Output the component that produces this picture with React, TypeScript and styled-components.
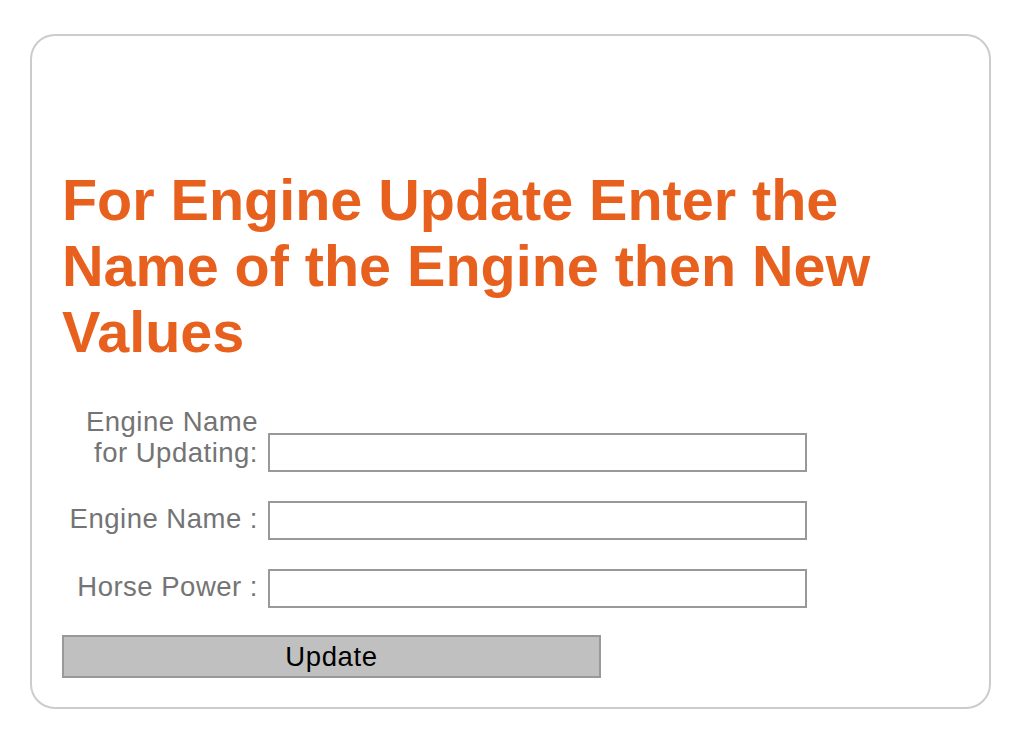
import React from "react";
import styled, { createGlobalStyle } from "styled-components";

const Global = createGlobalStyle`
  html, body { margin: 0; padding: 0; background: #ffffff; }
  body { font-family: "Liberation Sans", Arial, Helvetica, sans-serif; }
`;

const Card = styled.div`
  box-sizing: border-box;
  margin: 34px 0 0 30px;
  width: 961px;
  height: 675px;
  border: 2px solid #cccccc;
  border-radius: 25px;
  padding: 0 30px 0 30px;
  display: flex;
  flex-direction: column;
`;

const Heading = styled.h1`
  margin: 131px 0 0 0;
  width: 880px;
  font-size: 57.5px;
  line-height: 66px;
  font-weight: 700;
  color: #e8601e;
`;

const Form = styled.form`
  margin-top: 41px;
  display: grid;
  grid-template-columns: 196px 540px;
  column-gap: 10px;
  row-gap: 29px;
  align-items: end;
`;

const Label = styled.label<{ $drop?: number }>`
  text-align: right;
  font-size: 27.5px;
  letter-spacing: 0.5px;
  line-height: 31px;
  color: #747474;
  padding-bottom: ${(p) => p.$drop ?? 6}px;
  white-space: nowrap;
`;

const Input = styled.input`
  box-sizing: border-box;
  width: 539px;
  height: 39px;
  margin: 0;
  border: 2px solid #999999;
  background: #ffffff;
  font-family: inherit;
  font-size: 20px;
  padding: 0 6px;
  outline: none;
`;

const Button = styled.button`
  grid-column: 1 / span 2;
  box-sizing: border-box;
  width: 539px;
  height: 43px;
  margin: -2px 0 0 0;
  border: 2px solid #999999;
  background: #c0c0c0;
  color: #000000;
  font-family: inherit;
  font-size: 27.5px;
  letter-spacing: 0.6px;
  padding: 0;
  cursor: pointer;
`;

export default function App() {
  return (
    <>
      <Global />
      <Card>
        <Heading>For Engine Update Enter the Name of the Engine then New Values</Heading>
        <Form onSubmit={(e) => e.preventDefault()}>
          <Label $drop={4}>
            Engine Name
            <br />
            for Updating:
          </Label>
          <Input type="text" />
          <Label>Engine Name :</Label>
          <Input type="text" />
          <Label>Horse Power :</Label>
          <Input type="text" />
          <Button type="submit">Update</Button>
        </Form>
      </Card>
    </>
  );
}
